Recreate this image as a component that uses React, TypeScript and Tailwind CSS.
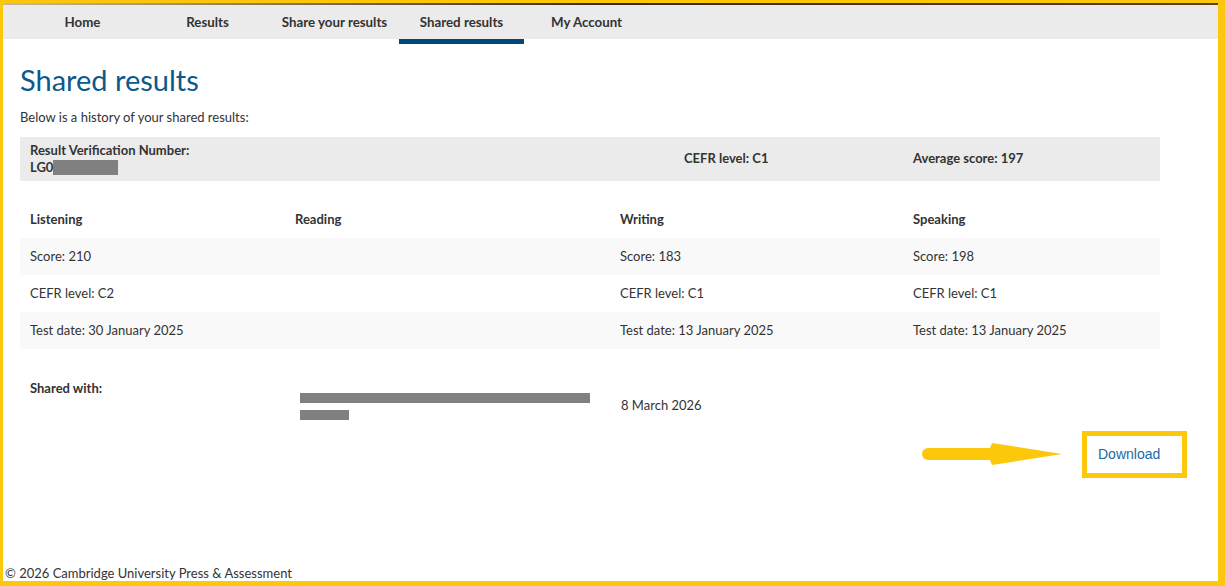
import React from "react";

const F = { fontFamily: "Lato, 'Open Sans', sans-serif" };

function NavItem({ label, active, w = 125 }: { label: string; active?: boolean; w?: number }) {
  return (
    <div
      className="relative flex h-full items-center justify-center pt-[2px] text-[13.3px] font-bold text-[#333]"
      style={{ width: w }}
    >
      {label}
      {active && <div className="absolute left-0 right-0 top-full h-[5px] bg-[#00497a]" />}
    </div>
  );
}

function Redact({ w, h }: { w: number; h: number }) {
  return <span className="inline-block bg-[#808080] align-middle" style={{ width: w, height: h }} />;
}

const cols = "grid grid-cols-[265px_325px_293px_257px]";

export default function App() {
  return (
    <div
      className="flex h-[586px] w-[1225px] flex-col overflow-hidden border-b-[5px] border-l-[3px] border-r-[7px] border-t-[3px] border-[#fdc70c] bg-white text-[#333]"
      style={F}
    >
      <div className="h-[2px] bg-gradient-to-r from-[#c9b9a0] via-[#3a2a20] to-[#5a4030]" />
      <nav className="relative z-10 flex h-[34px] bg-[#ebebeb] pl-[17px]">
        <NavItem label="Home" />
        <NavItem label="Results" />
        <NavItem label="Share your results" w={129} />
        <NavItem label="Shared results" active />
        <NavItem label="My Account" />
      </nav>
      <main className="flex-1 pl-[17px] pr-[58px] text-[13px]">
        <h1 className="mt-[23px] text-[29px] font-normal leading-[36px] text-[#0b5a8b]">Shared results</h1>
        <p className="mt-[10px] leading-[18px]">Below is a history of your shared results:</p>
        <div className="mt-[11px] flex h-[44px] items-center bg-[#ebebeb] font-bold">
          <div className="w-[664px] pl-[10px] leading-[17px]">
            <div>Result Verification Number:</div>
            <div className="flex items-center">
              LG0<Redact w={65} h={15} />
            </div>
          </div>
          <div className="w-[229px]">CEFR level: C1</div>
          <div>Average score: 197</div>
        </div>
        <div className="mt-[20px]">
          <div className={`${cols} h-[37px] items-center font-bold`}>
            <div className="pl-[10px]">Listening</div>
            <div className="pl-[10px]">Reading</div>
            <div className="pl-[10px]">Writing</div>
            <div className="pl-[10px]">Speaking</div>
          </div>
          <div className={`${cols} h-[37px] items-center bg-[#f9f9f9]`}>
            <div className="pl-[10px]">Score: 210</div>
            <div className="pl-[10px]"></div>
            <div className="pl-[10px]">Score: 183</div>
            <div className="pl-[10px]">Score: 198</div>
          </div>
          <div className={`${cols} h-[37px] items-center`}>
            <div className="pl-[10px]">CEFR level: C2</div>
            <div className="pl-[10px]"></div>
            <div className="pl-[10px]">CEFR level: C1</div>
            <div className="pl-[10px]">CEFR level: C1</div>
          </div>
          <div className={`${cols} h-[37px] items-center bg-[#f9f9f9]`}>
            <div className="pl-[10px]">Test date: 30 January 2025</div>
            <div className="pl-[10px]"></div>
            <div className="pl-[10px]">Test date: 13 January 2025</div>
            <div className="pl-[10px]">Test date: 13 January 2025</div>
          </div>
          <div className={`${cols} mt-[30px]`}>
            <div className="pl-[10px] font-bold">Shared with:</div>
            <div className="flex flex-col gap-[7px] pl-[15px] pt-[14px]">
              <Redact w={290} h={10} />
              <Redact w={49} h={10} />
            </div>
            <div className="pl-[11px] pt-[17px]">8 March 2026</div>
            <div />
          </div>
        </div>
        <div className="mt-[11px] flex items-center justify-end">
          <svg width="142" height="24" viewBox="0 0 142 24" className="mr-[18px]">
            <path d="M6 5 H68 L70 0 L140 11 L70 22 L68 17 H6 A6 6 0 0 1 6 5 Z" fill="#fdc70c" />
          </svg>
          <div className="-mr-[27px] flex h-[47px] w-[105px] items-center border-[5px] border-[#fdc70c] pl-[11px]">
            <span className="text-[14px] text-[#1a6aa8]" style={{ fontFamily: "'Liberation Sans', Arial, sans-serif" }}>
              Download
            </span>
          </div>
        </div>
      </main>
      <footer className="pl-[2px] text-[13px] leading-[16px]">© 2026 Cambridge University Press &amp; Assessment</footer>
    </div>
  );
}
